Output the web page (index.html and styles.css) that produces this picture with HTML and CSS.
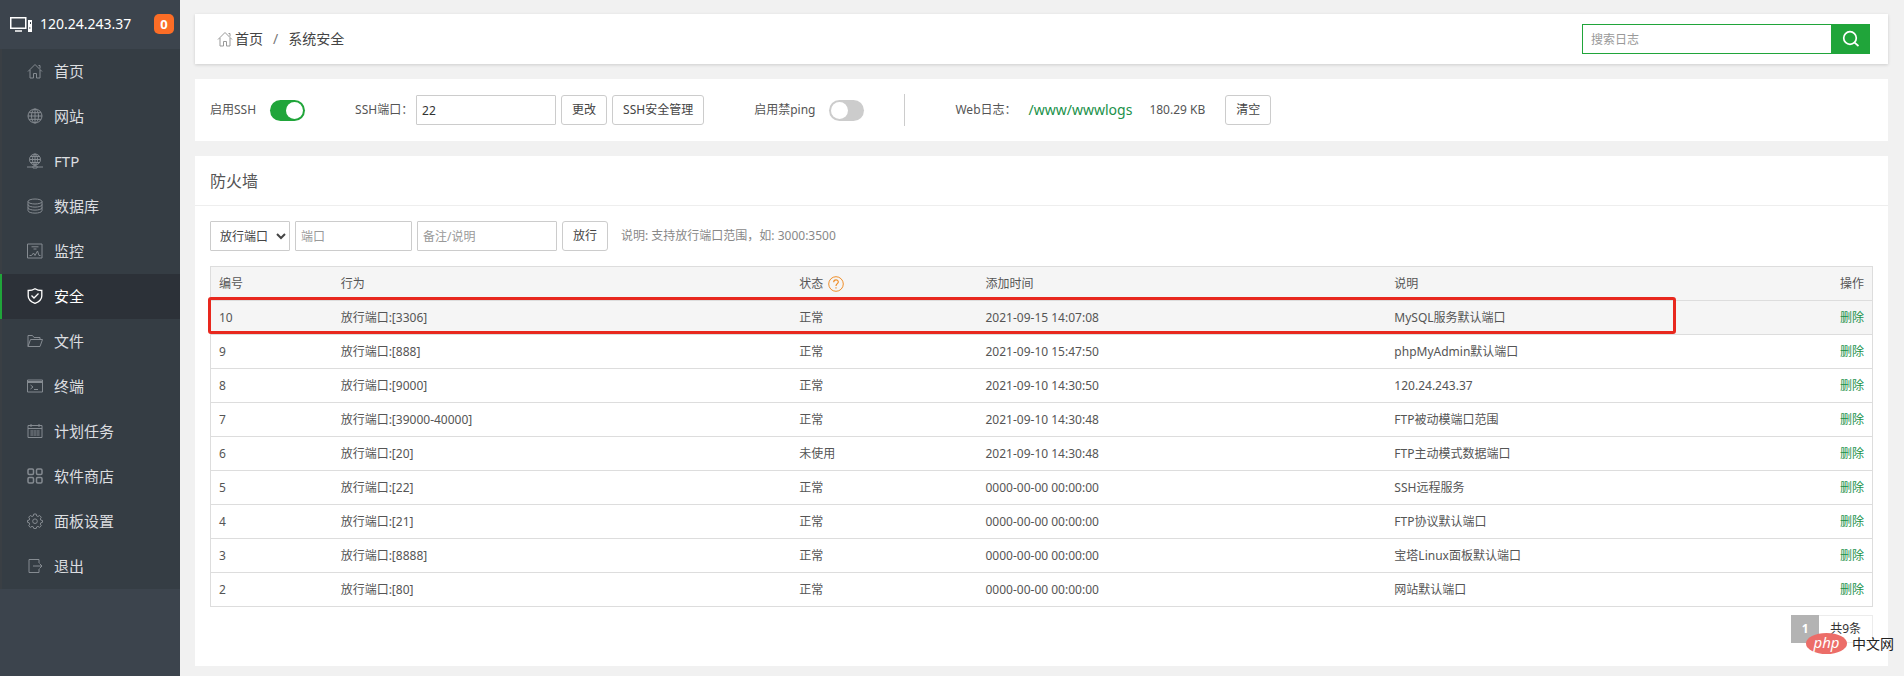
FILE: index.html
```
<!DOCTYPE html>
<html lang="zh-CN">
<head>
<meta charset="utf-8">
<title>系统安全</title>
<link rel="stylesheet" href="styles.css">
</head>
<body>
<div class="app">
  <aside class="sidebar">
    <div class="server">
      <svg class="server-icon" width="24" height="18" viewBox="0 0 24 18" fill="none" stroke="#fff"><rect x="2.750" y="2.750" width="15" height="10.500" stroke-width="1.500"/><path d="M7 16h7" stroke-width="1.500"/><path d="M20 5h4v12h-4z" fill="#fff" stroke="none"/><path d="M22.500 7v2M21 13h1.500" stroke="#3c444d"/></svg>
      <span class="server-ip">120.24.243.37</span>
      <span class="badge">0</span>
    </div>
    <nav class="menu">
      <a href="#"><svg class="icon" viewBox="0 0 16 16"><path d="M1 8.500 8 1.500l7 7M3 7v8h3.500v-4.500h3V15H13V7M11.500 2.500h1.500v3"/></svg>首页</a>
      <a href="#"><svg class="icon" viewBox="0 0 16 16"><circle cx="8" cy="8" r="7"/><path d="M1 8h14M2 4.700h12M2 11.300h12M8 1v14"/><ellipse cx="8" cy="8" rx="3.500" ry="7"/></svg>网站</a>
      <a href="#"><svg class="icon" viewBox="0 0 16 16"><circle cx="8" cy="6.500" r="5.500"/><path d="M2.500 6.500h11M3.500 3.500h9M3.500 9.500h9M8 1v13"/><ellipse cx="8" cy="6.500" rx="2.500" ry="5.500"/><path d="M0 14h6M10 14h6M6 13h4v2H6z"/></svg>FTP</a>
      <a href="#"><svg class="icon" viewBox="0 0 16 16"><ellipse cx="8" cy="3.500" rx="7" ry="2.500"/><path d="M1 3.500v9C1 16 15 16 15 12.500v-9M1 6.500C1 10 15 10 15 6.500M1 9.500C1 13 15 13 15 9.500"/></svg>数据库</a>
      <a href="#"><svg class="icon" viewBox="0 0 16 16"><path d="M.5 1h14.500v14H.5zM4.500 3.800h7M6.500 6h3M2.500 12.500h2l2-2.500 1.500 2.500 2.500-4.500 1.500 4.500h1.500"/></svg>监控</a>
      <a href="#" class="active"><svg class="icon" viewBox="0 0 16 16"><path d="M8 .7C6 2 3.800 2.500 1.200 2.500V8c0 3.500 3.300 6 6.800 7.300C11.500 14 14.800 11.500 14.800 8V2.500C12.200 2.500 10 2 8 .7zM4.500 7.500 7 10l4.500-4.500"/></svg>安全</a>
      <a href="#"><svg class="icon" viewBox="0 0 16 16"><path d="M1 13.500v-11h4.500l1.500 2h6v2M1 13.500l2.500-7H15.500l-2.500 7z"/></svg>文件</a>
      <a href="#"><svg class="icon" viewBox="0 0 16 16"><path d="M.5 2h15v12H.5zM.5 3.500h15M.5 4.500h15M3.500 7l2.500 2-2.500 2M7 11.500h4"/></svg>终端</a>
      <a href="#"><svg class="icon" viewBox="0 0 16 16"><path d="M1 2.500h14v12H1zM1 5.500h14M4 1v3M12 1v3"/><path d="M3 8h10M3 10h10M3 12h10M5 7v6M8 7v6M11 7v6" stroke-width=".6"/></svg>计划任务</a>
      <a href="#"><svg class="icon bold" viewBox="0 0 16 16"><rect x="1" y="1" width="5.500" height="5.500" rx="1.200"/><rect x="9.500" y="1" width="5.500" height="5.500" rx="1.200"/><rect x="1" y="9.500" width="5.500" height="5.500" rx="1.200"/><rect x="9.500" y="9.500" width="5.500" height="5.500" rx="1.200"/></svg>软件商店</a>
      <a href="#"><svg class="icon" viewBox="0 0 16 16"><path d="M6.800 1h2.400l.5 2 1.200.5 1.800-1 1.600 1.700-1 1.700.5 1.200 1.700.4v1.800l-1.700.5-.5 1.300 1 1.700-1.600 1.600-1.800-1-1.200.5-.5 1.600H6.800l-.5-1.600-1.300-.5-1.700 1-1.600-1.600 1-1.700-.5-1.300-1.700-.5V7.500l1.700-.4.500-1.200-1-1.700L3.300 2.500l1.700 1L6.300 3z"/><circle cx="8" cy="8.200" r="2.300"/></svg>面板设置</a>
      <a href="#"><svg class="icon" viewBox="0 0 16 16"><path d="M12 5V1.500H2v13h10V11M6 8h9M12.500 5.500 15 8l-2.500 2.500"/></svg>退出</a>
    </nav>
  </aside>

  <main class="main">
    <header class="card topbar">
      <nav class="crumbs">
        <a href="#"><svg class="crumb-icon" viewBox="0 0 16 16"><path d="M1 8.500 8 1.500l7 7M3 7v8h3.500v-4.500h3V15H13V7M11.500 2.500h1.500v3"/></svg>首页</a>
        <span class="slash">/</span>
        <span>系统安全</span>
      </nav>
      <form class="search">
        <input type="text" placeholder="搜索日志" aria-label="搜索日志">
        <button type="button" aria-label="搜索"><svg width="18" height="18" viewBox="0 0 18 18" fill="none" stroke="#fff" stroke-width="1.700"><circle cx="8" cy="8" r="6.300"/><path d="m12.300 12.300 4.200 3.700"/></svg></button>
      </form>
    </header>

    <section class="card settings">
      <label class="switch-field">启用SSH<input class="switch" type="checkbox" checked></label>
      <div class="port-field">
        <label for="ssh-port">SSH端口：</label>
        <input class="field port" id="ssh-port" type="text" value="22">
        <button class="btn" type="button">更改</button>
        <button class="btn" type="button">SSH安全管理</button>
      </div>
      <label class="switch-field">启用禁ping<input class="switch" type="checkbox"></label>
      <div class="logs">
        <span>Web日志：</span>
        <a class="path" href="#">/www/wwwlogs</a>
        <span class="size">180.29 KB</span>
        <button class="btn" type="button">清空</button>
      </div>
    </section>

    <section class="card firewall">
      <h1>防火墙</h1>
      <div class="body">
        <form class="rule-form">
          <select class="field type" aria-label="类型"><option>放行端口</option><option>屏蔽IP</option></select>
          <input class="field number" type="text" placeholder="端口" aria-label="端口">
          <input class="field remark" type="text" placeholder="备注/说明" aria-label="备注/说明">
          <button class="btn" type="button">放行</button>
          <span class="hint">说明: 支持放行端口范围，如: 3000:3500</span>
        </form>
        <div class="table-wrap">
          <table>
            <colgroup><col class="c-id"><col class="c-act"><col class="c-state"><col class="c-time"><col><col class="c-op"></colgroup>
            <thead><tr><th>编号</th><th>行为</th><th><span class="state-head">状态<svg width="16" height="16" viewBox="0 0 16 16" fill="none" stroke="#ef8f2a"><circle cx="8" cy="8" r="7.300"/><path d="M5.700 6.300C5.700 3 10.300 3.200 10.300 6 10.300 7.700 8 7.700 8 10M8 11.200v1.300" stroke-width="1.200"/></svg></span></th><th>添加时间</th><th>说明</th><th>操作</th></tr></thead>
            <tbody>
              <tr class="hover"><td>10</td><td>放行端口:[3306]</td><td>正常</td><td>2021-09-15 14:07:08</td><td>MySQL服务默认端口</td><td><a href="#">删除</a></td></tr>
              <tr><td>9</td><td>放行端口:[888]</td><td>正常</td><td>2021-09-10 15:47:50</td><td>phpMyAdmin默认端口</td><td><a href="#">删除</a></td></tr>
              <tr><td>8</td><td>放行端口:[9000]</td><td>正常</td><td>2021-09-10 14:30:50</td><td>120.24.243.37</td><td><a href="#">删除</a></td></tr>
              <tr><td>7</td><td>放行端口:[39000-40000]</td><td>正常</td><td>2021-09-10 14:30:48</td><td>FTP被动模端口范围</td><td><a href="#">删除</a></td></tr>
              <tr><td>6</td><td>放行端口:[20]</td><td>未使用</td><td>2021-09-10 14:30:48</td><td>FTP主动模式数据端口</td><td><a href="#">删除</a></td></tr>
              <tr><td>5</td><td>放行端口:[22]</td><td>正常</td><td>0000-00-00 00:00:00</td><td>SSH远程服务</td><td><a href="#">删除</a></td></tr>
              <tr><td>4</td><td>放行端口:[21]</td><td>正常</td><td>0000-00-00 00:00:00</td><td>FTP协议默认端口</td><td><a href="#">删除</a></td></tr>
              <tr><td>3</td><td>放行端口:[8888]</td><td>正常</td><td>0000-00-00 00:00:00</td><td>宝塔Linux面板默认端口</td><td><a href="#">删除</a></td></tr>
              <tr><td>2</td><td>放行端口:[80]</td><td>正常</td><td>0000-00-00 00:00:00</td><td>网站默认端口</td><td><a href="#">删除</a></td></tr>
            </tbody>
          </table>
          <div class="highlight"></div>
        </div>
        <div class="pager"><span class="current">1</span><span class="total">共9条</span></div>
      </div>
    </section>
  </main>
</div>
<div class="watermark"><span class="php">php</span><span>中文网</span></div>
</body>
</html>
```
FILE: styles.css
```
* { box-sizing: border-box; }
body {
  margin: 0;
  background: #f1f1f1;
  color: #555;
  font: 12px/18px "Noto Sans", "Noto Sans CJK SC", sans-serif;
}
a { color: inherit; text-decoration: none; }
input, select, button { font: inherit; color: inherit; margin: 0; }
button { cursor: pointer; }
.app { display: flex; min-height: 100vh; }

.sidebar { flex: none; width: 180px; background: #3c444d; color: #fff; }
.server { display: flex; align-items: center; height: 49px; padding: 0 6px 2px 8px; font-size: 14px; }
.server-icon { flex: none; margin-right: 8px; }
.server-ip { flex: 1; }
.badge {
  width: 20px; height: 20px; border-radius: 5px;
  background: #fc6d26; font-size: 13px; font-weight: 700; line-height: 20px; text-align: center;
}
.menu { background: #353d44; }
.menu a {
  display: flex; align-items: center; gap: 11px;
  height: 45px; padding: 0 0 2px 25px;
  border-left: 2px solid #3a3f44;
  color: #dcdee0; font-size: 15px;
}
.menu a.active { background: #2c3138; border-left-color: #20a53a; color: #fff; }
.icon { width: 16px; height: 16px; fill: none; stroke: #858b91; stroke-width: 1; }
.icon.bold { stroke-width: 1.5; }
.active .icon { stroke: #fff; stroke-width: 1.3; }

.main { flex: 1; min-width: 0; display: flex; flex-direction: column; gap: 15px; padding: 14px 16px 10px 15px; }
.card { background: #fff; }
.topbar {
  display: flex; align-items: center; justify-content: space-between;
  height: 50px; padding: 0 18px 0 22px;
  box-shadow: 0 1px 3px rgba(0, 0, 0, .15);
}
.crumbs { display: flex; align-items: center; color: #444; font-size: 14px; }
.crumbs a { display: flex; align-items: center; gap: 2px; }
.crumb-icon { width: 16px; height: 16px; fill: none; stroke: #999; stroke-width: 1; }
.slash { margin: 0 10px; color: #777; }
.search { display: flex; }
.search input { width: 249px; height: 30px; padding: 0 8px; border: 1px solid #20a53a; border-right: 0; outline: 0; }
.search button { display: flex; align-items: center; justify-content: center; width: 39px; height: 30px; padding: 0; border: 0; background: #20a53a; }
::placeholder { color: #999; opacity: 1; }

.settings { display: flex; align-items: center; height: 62px; padding: 0 15px; }
.switch-field { display: flex; align-items: center; }
.switch {
  appearance: none; display: flex; align-items: center;
  width: 35px; height: 21px; padding: 2px; margin-left: 14px; border-radius: 11px; background: #ccc;
}
.switch::before { content: ""; width: 17px; height: 17px; border-radius: 50%; background: #fff; }
.switch:checked { background: #20a53a; justify-content: flex-end; }
.port-field { display: flex; align-items: center; gap: 5px; margin: 0 50px; }
.port-field label { width: 56px; white-space: nowrap; }
.field { height: 30px; padding: 0 5px; border: 1px solid #ccc; border-radius: 1px; background: #fff; }
.port { width: 140px; color: #333; }
.btn { height: 30px; padding: 0 10px; border: 1px solid #ccc; border-radius: 3px; background: #fff; color: #444; }
.logs {
  display: flex; align-items: center;
  height: 32px; margin-left: 40px; padding-left: 50px; border-left: 1px solid #ccc;
}
.path { margin-left: 12px; color: #20914a; font-size: 14px; }
.size { margin: 0 20px 0 17px; }

.firewall { flex: 1; }
h1 { margin: 0; padding: 2px 15px 0; border-bottom: 1px solid #eee; font-size: 16px; font-weight: 400; line-height: 47px; }
.body { padding: 15px 15px 22px; }
.rule-form { display: flex; align-items: center; gap: 5px; margin-bottom: 15px; }
.type { width: 80px; color: #444; }
.number { width: 117px; }
.remark { width: 140px; }
.hint { margin-left: 8px; color: #888; }

.table-wrap { position: relative; }
table { width: 100%; border-collapse: collapse; table-layout: fixed; border: 1px solid #ddd; }
th, td { height: 34px; padding: 0 8px; border-top: 1px solid #ddd; font-weight: 400; text-align: left; }
th, .hover td { background: #f5f5f5; }
th:last-child, td:last-child { text-align: right; }
td a { color: #20914a; }
.c-id { width: 7.35%; }
.c-act { width: 27.6%; }
.c-state { width: 11.2%; }
.c-time { width: 24.6%; }
.c-op { width: 6%; }
.state-head { display: flex; align-items: center; gap: 5px; }
.highlight {
  position: absolute; top: 31px; left: -2px; width: 88.3%; height: 37px;
  border: 3px solid #e8281e; border-radius: 3px; pointer-events: none;
}
.pager { display: flex; justify-content: flex-end; margin-top: 8px; line-height: 28px; }
.current { width: 28px; background: #b3b3b3; color: #fff; font-weight: 700; text-align: center; }
.total { padding: 0 11px; border: 1px solid #ececec; border-left: 0; line-height: 26px; color: #333; }

.watermark {
  position: absolute; right: 10px; top: 633px; display: flex; align-items: center; gap: 5px;
  color: #222; font-size: 14px; line-height: 21px;
}
.php {
  width: 41px; height: 21px; border-radius: 50%;
  background: #ec6d68; color: #fff; font-size: 15px; font-style: italic; line-height: 18px; text-align: center;
}
```
